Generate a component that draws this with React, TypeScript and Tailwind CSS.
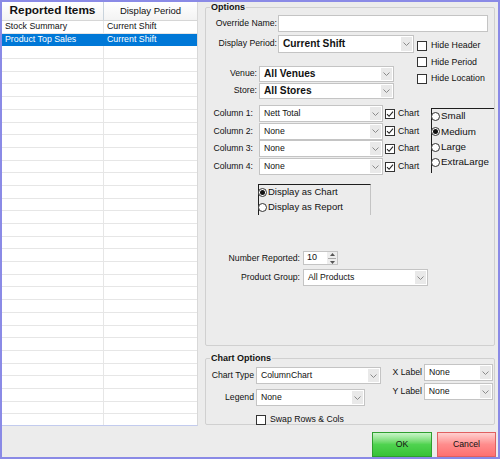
import React from "react";

const Chevron = () => (
  <svg width="7" height="4" viewBox="0 0 7 4">
    <path d="M0.5 0.5 L3.5 3.5 L6.5 0.5" fill="none" stroke="#8a8a8a" strokeWidth="1" />
  </svg>
);

function Combo({ className, value, bold }: { className: string; value: string; bold?: boolean }) {
  return (
    <div className={`flex items-stretch border border-[#c4c4c4] bg-white p-px ${className}`}>
      <div className={`flex flex-1 items-center pl-[3px] ${bold ? "text-[10.2px] font-bold" : "text-[8.7px]"}`}>{value}</div>
      <div className="flex w-[11px] items-center justify-center bg-[#e9e9e9]">
        <Chevron />
      </div>
    </div>
  );
}

function Check({ checked }: { checked?: boolean }) {
  return (
    <div className="flex h-[10px] w-[10px] items-center justify-center border border-[#333] bg-white">
      {checked && (
        <svg width="8" height="8" viewBox="0 0 8 8">
          <path d="M1 4.2 L3.1 6.3 L7 1.6" fill="none" stroke="#222" strokeWidth="1.1" />
        </svg>
      )}
    </div>
  );
}

function Radio({ checked }: { checked?: boolean }) {
  return (
    <div className="flex h-[9px] w-[9px] shrink-0 items-center justify-center rounded-full border border-[#333] bg-white">
      {checked && <div className="h-[5px] w-[5px] rounded-full bg-[#111]" />}
    </div>
  );
}

const rows = [
  { item: "Stock Summary", period: "Current Shift" },
  { item: "Product Top Sales", period: "Current Shift", selected: true },
];

export default function App() {
  const filler = Array.from({ length: 30 });
  return (
    <div className="flex h-[459px] w-[500px] overflow-hidden border-2 border-[#8a8ae6] bg-[#ececec] font-['Liberation_Sans',Arial,sans-serif] text-[8.7px] text-[#111]">
      {/* left grid */}
      <div className="flex w-[197px] flex-col">
        <div className="flex h-[424px] flex-col overflow-hidden border-b border-r border-b-[#c2cbee] border-r-[#d8d8d8] bg-white">
          <div className="flex h-[19px] shrink-0 border-b border-[#d6d6d6] bg-gradient-to-b from-white to-[#f3f3f3]">
            <div className="flex w-[102px] items-center justify-center border-r border-[#c9d3dc] text-[11.8px] font-bold">Reported Items</div>
            <div className="flex flex-1 items-center justify-center text-[9.5px]">Display Period</div>
          </div>
          {rows.map((r) => (
            <div
              key={r.item}
              className={`flex h-[12.7px] shrink-0 items-center border-b ${r.selected ? "border-[#0078d7] bg-[#0078d7] text-white" : "border-[#e6e6e6]"}`}
            >
              <div className={`w-[102px] pl-[3px] text-[8.8px] ${r.selected ? "" : "h-full flex items-center border-r border-[#e6e6e6]"}`}>{r.item}</div>
              <div className="pl-[3px] text-[8.8px]">{r.period}</div>
            </div>
          ))}
          {filler.map((_, i) => (
            <div key={i} className="flex h-[12.7px] shrink-0 border-b border-[#e6e6e6]">
              <div className="w-[102px] border-r border-[#e6e6e6]" />
            </div>
          ))}
        </div>
      </div>

      {/* right side */}
      <div className="flex flex-1 flex-col pl-[7px] pr-[3px]">
        {/* Options group */}
        <div className="relative mt-[5px] h-[339px] rounded-[2px] border border-[#d0d0d0]">
          <div className="absolute -top-[7px] left-[4px] bg-[#ececec] px-px text-[9px] font-bold">Options</div>

          <div className="mt-[7px] flex h-[17px] items-center">
            <div className="w-[72px] pr-px text-right">Override Name:</div>
            <div className="h-[17px] w-[210px] border border-[#c4c4c4] bg-white" />
          </div>

          <div className="mt-[3px] flex">
            <div className="flex w-[211px] flex-col">
              <div className="flex items-center">
                <div className="w-[72px] pr-px text-right">Display Period:</div>
                <Combo className="h-[18px] w-[136px]" value="Current Shift" bold />
              </div>
              <div className="mt-[13px] flex items-center">
                <div className="w-[53px] pr-[2px] text-right">Venue:</div>
                <Combo className="h-[16px] w-[135px]" value="All Venues" bold />
              </div>
              <div className="mt-px flex items-center">
                <div className="w-[53px] pr-[2px] text-right">Store:</div>
                <Combo className="h-[16px] w-[135px]" value="All Stores" bold />
              </div>
            </div>
            <div className="flex flex-col gap-[5.6px] pt-[5px]">
              {["Hide Header", "Hide Period", "Hide Location"].map((t) => (
                <div key={t} className="flex h-[11px] items-center gap-[4px]">
                  <Check />
                  <span className="text-[8.8px]">{t}</span>
                </div>
              ))}
            </div>
          </div>

          <div className="mt-[6px] flex">
            <div className="flex w-[225px] flex-col gap-[0.7px]">
              {["Nett Total", "None", "None", "None"].map((v, i) => (
                <div key={i} className="flex h-[17px] items-center">
                  <div className="w-[53px] pr-[6px] text-right">Column {i + 1}:</div>
                  <Combo className="h-[17px] w-[124px]" value={v} />
                  <div className="ml-[2px]">
                    <Check checked />
                  </div>
                  <span className="ml-[3px]">Chart</span>
                </div>
              ))}
            </div>
            <div className="mt-[3px] flex h-[65px] w-[63px] flex-col border-l border-t border-[#1e1e1e]">
              {[
                { t: "Small" },
                { t: "Medium", c: true },
                { t: "Large" },
                { t: "ExtraLarge" },
              ].map((o) => (
                <div key={o.t} className="-ml-px flex h-[15.3px] items-center gap-px text-[9.8px]">
                  <Radio checked={o.c} />
                  <span>{o.t}</span>
                </div>
              ))}
            </div>
          </div>

          <div className="ml-[52px] mt-[9px] flex h-[31px] w-[113px] flex-col border-l border-r border-t border-l-[#1e1e1e] border-r-[#c4c4c4] border-t-[#1e1e1e]">
            {[
              { t: "Display as Chart", c: true },
              { t: "Display as Report" },
            ].map((o) => (
              <div key={o.t} className="-ml-px flex h-[15px] items-center gap-px text-[9.5px]">
                <Radio checked={o.c} />
                <span>{o.t}</span>
              </div>
            ))}
          </div>

          <div className="mt-[36px] flex h-[14px] items-center">
            <div className="w-[97px] pr-[3px] text-right">Number Reported:</div>
            <div className="flex h-[14px] w-[35px] items-stretch border border-[#c4c4c4] bg-white">
              <div className="flex flex-1 items-center pl-[3px] text-[9px]">10</div>
              <div className="flex w-[10px] flex-col items-center justify-center gap-[2px] bg-[#ededed]">
                <svg width="5" height="3" viewBox="0 0 5 3">
                  <path d="M0 3 L2.5 0 L5 3 Z" fill="#555" />
                </svg>
                <div className="h-px w-[8px] bg-[#aaa]" />
                <svg width="5" height="3" viewBox="0 0 5 3">
                  <path d="M0 0 L2.5 3 L5 0 Z" fill="#555" />
                </svg>
              </div>
            </div>
          </div>

          <div className="mt-[4px] flex items-center">
            <div className="w-[97px] pr-[3px] text-right">Product Group:</div>
            <Combo className="h-[17px] w-[125px]" value="All Products" />
          </div>
        </div>

        {/* Chart Options group */}
        <div className="relative mt-[12px] flex h-[67px] rounded-[2px] border border-[#d0d0d0]">
          <div className="absolute -top-[7px] left-[4px] bg-[#ececec] px-px text-[9px] font-bold">Chart Options</div>
          <div className="flex flex-col">
            <div className="mt-[8px] flex items-center">
              <div className="w-[50px] pr-[2px] text-right">Chart Type</div>
              <Combo className="h-[17px] w-[125px]" value="ColumnChart" />
            </div>
            <div className="mt-[5px] flex items-center">
              <div className="w-[50px] pr-[2px] text-right">Legend</div>
              <Combo className="h-[17px] w-[109px]" value="None" />
            </div>
            <div className="mt-[7px] flex items-center gap-[4px] pl-[50px]">
              <Check />
              <span>Swap Rows &amp; Cols</span>
            </div>
          </div>
          <div className="ml-auto mr-px flex flex-col">
            <div className="mt-[5px] flex items-center">
              <div className="pr-[2px]">X Label</div>
              <Combo className="h-[17px] w-[69px]" value="None" />
            </div>
            <div className="mt-[2px] flex items-center">
              <div className="pr-[2px]">Y Label</div>
              <Combo className="h-[17px] w-[69px]" value="None" />
            </div>
          </div>
        </div>

        {/* buttons */}
        <div className="mt-[7px] flex justify-end gap-[5px]">
          <button className="h-[25px] w-[60px] border border-[#2f9e2f] bg-gradient-to-b from-[#c9f5c9] via-[#4fd34f] to-[#37c237] text-[8.7px] text-[#111]">
            OK
          </button>
          <button className="-mr-px h-[25px] w-[59px] border border-[#e06060] bg-gradient-to-b from-[#ffd0d0] via-[#ff8c8c] to-[#ff7070] text-[8.7px] text-[#111]">
            Cancel
          </button>
        </div>
      </div>
    </div>
  );
}
